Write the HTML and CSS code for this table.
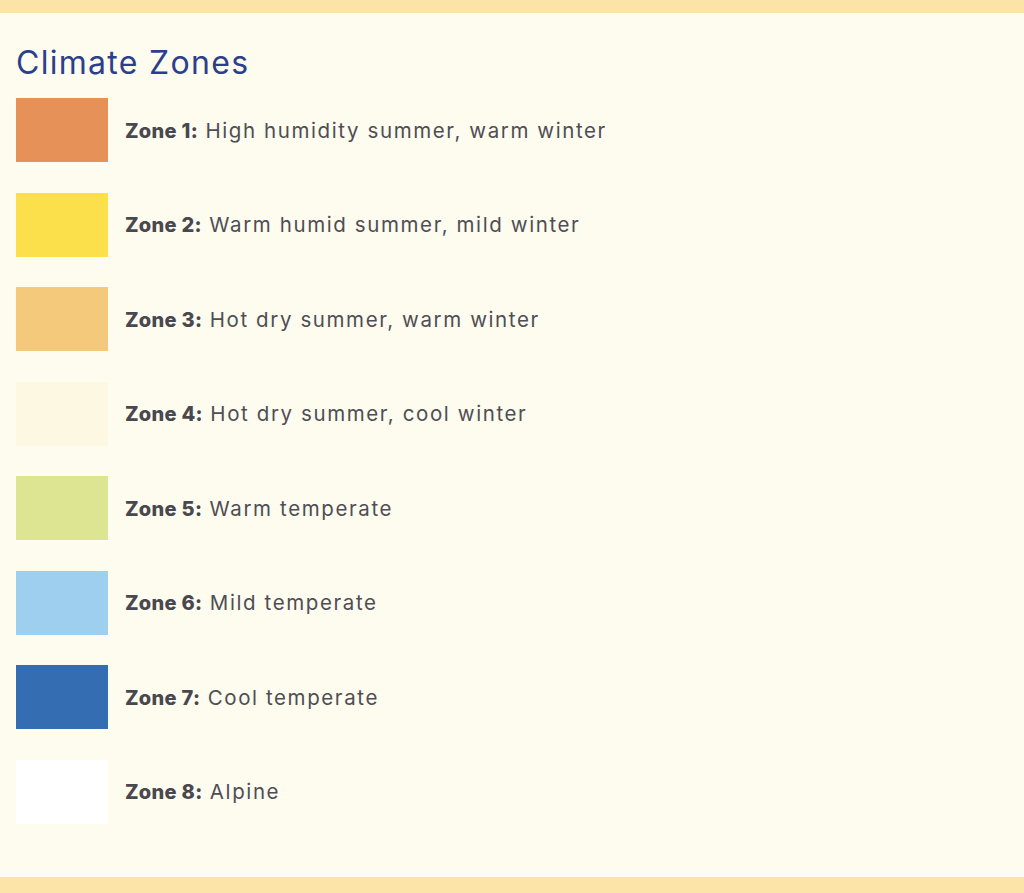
FILE: index.html
```html
<!DOCTYPE html>
<html lang="en">
<head>
<meta charset="utf-8">
<title>Climate Zones</title>
<link rel="stylesheet" href="styles.css">
</head>
<body>
<section class="card">
  <h2 class="title">Climate Zones</h2>
  <ul class="legend">
    <li class="row"><span class="swatch z1"></span><span class="label"><b>Zone 1:</b> High humidity summer, warm winter</span></li>
    <li class="row"><span class="swatch z2"></span><span class="label"><b>Zone 2:</b> Warm humid summer, mild winter</span></li>
    <li class="row"><span class="swatch z3"></span><span class="label"><b>Zone 3:</b> Hot dry summer, warm winter</span></li>
    <li class="row"><span class="swatch z4"></span><span class="label"><b>Zone 4:</b> Hot dry summer, cool winter</span></li>
    <li class="row"><span class="swatch z5"></span><span class="label"><b>Zone 5:</b> Warm temperate</span></li>
    <li class="row"><span class="swatch z6"></span><span class="label"><b>Zone 6:</b> Mild temperate</span></li>
    <li class="row"><span class="swatch z7"></span><span class="label"><b>Zone 7:</b> Cool temperate</span></li>
    <li class="row"><span class="swatch z8"></span><span class="label"><b>Zone 8:</b> Alpine</span></li>
  </ul>
</section>
</body>
</html>
```
FILE: styles.css
```css
html, body {
  margin: 0;
  padding: 0;
  background: #fefbef;
}
.card {
  box-sizing: border-box;
  min-height: 893px;
  border-top: 13px solid #fce3a8;
  border-bottom: 16px solid #fce3a8;
  padding: 30px 16px 0 16px;
  font-family: "Inter", "Liberation Sans", sans-serif;
}
.title {
  margin: 0 0 15px 0;
  font-size: 32px;
  line-height: 40px;
  font-weight: 400;
  letter-spacing: 1.3px;
  color: #2c3f8c;
}
.legend {
  list-style: none;
  margin: 0;
  padding: 0;
  display: flex;
  flex-direction: column;
  gap: 30.5px;
}
.row {
  display: flex;
  align-items: center;
  gap: 17px;
}
.swatch {
  flex: none;
  width: 92px;
  height: 64px;
}
.label {
  font-size: 20.5px;
  letter-spacing: 1.6px;
  color: #4e4e54;
}
.label b {
  font-size: 20px;
  font-weight: 800;
  letter-spacing: 0.3px;
  color: #48484e;
}
.z1 { background: #e69158; }
.z2 { background: #fbe04b; }
.z3 { background: #f4c97b; }
.z4 { background: #fdf8e1; }
.z5 { background: #dde592; }
.z6 { background: #9fcfee; }
.z7 { background: #356db3; }
.z8 { background: #ffffff; }
```
